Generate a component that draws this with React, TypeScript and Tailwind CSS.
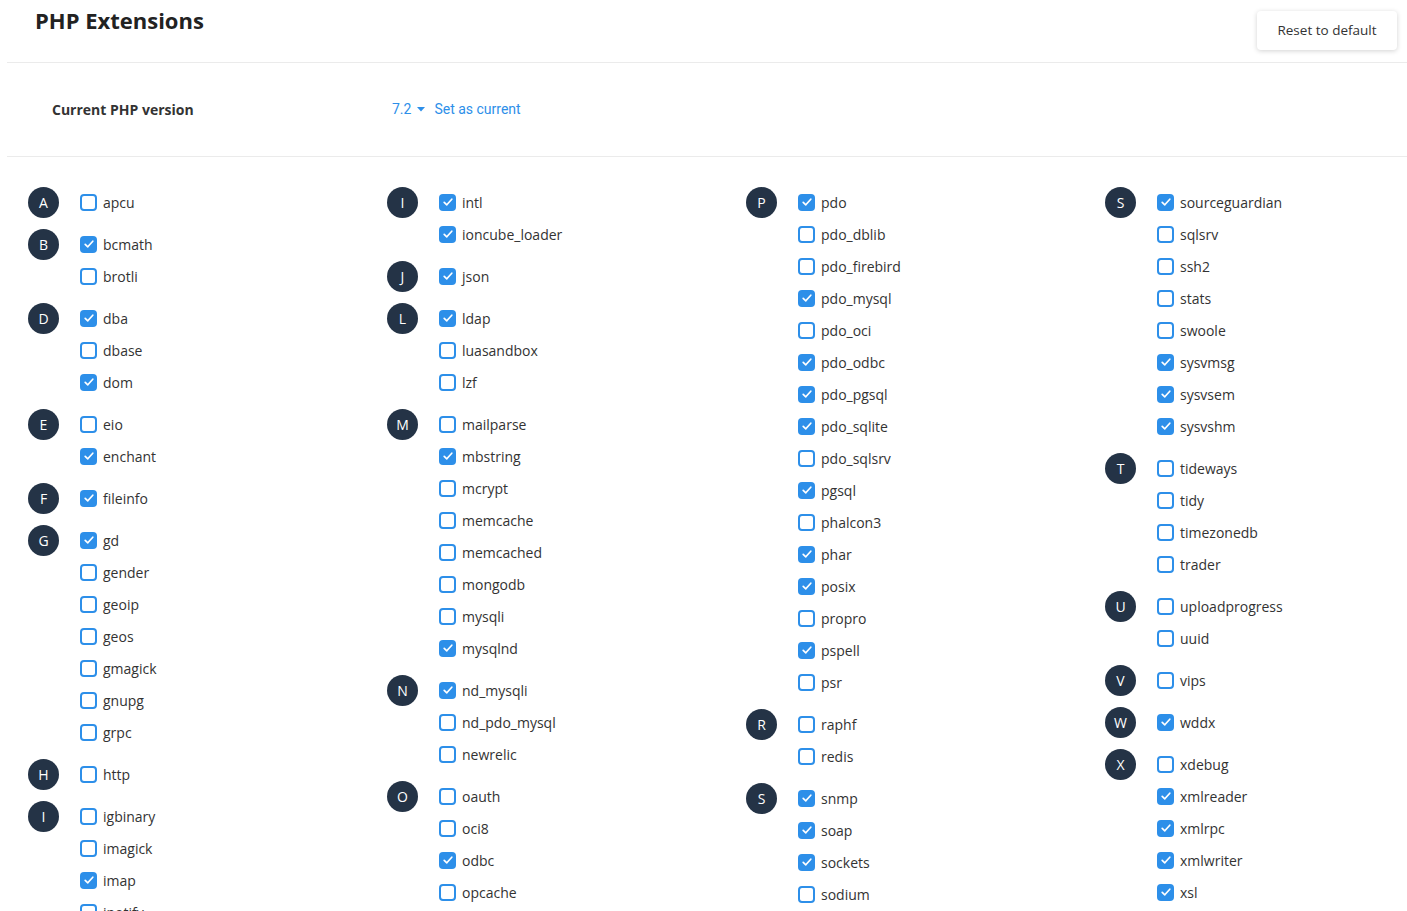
import React from 'react'

type Ext = [string, boolean]
type Group = { letter: string; items: Ext[] }

const columns: Group[][] = [
  [
    { letter: 'A', items: [['apcu', false]] },
    { letter: 'B', items: [['bcmath', true], ['brotli', false]] },
    { letter: 'D', items: [['dba', true], ['dbase', false], ['dom', true]] },
    { letter: 'E', items: [['eio', false], ['enchant', true]] },
    { letter: 'F', items: [['fileinfo', true]] },
    {
      letter: 'G',
      items: [['gd', true], ['gender', false], ['geoip', false], ['geos', false], ['gmagick', false], ['gnupg', false], ['grpc', false]],
    },
    { letter: 'H', items: [['http', false]] },
    { letter: 'I', items: [['igbinary', false], ['imagick', false], ['imap', true], ['inotify', false]] },
  ],
  [
    { letter: 'I', items: [['intl', true], ['ioncube_loader', true]] },
    { letter: 'J', items: [['json', true]] },
    { letter: 'L', items: [['ldap', true], ['luasandbox', false], ['lzf', false]] },
    {
      letter: 'M',
      items: [['mailparse', false], ['mbstring', true], ['mcrypt', false], ['memcache', false], ['memcached', false], ['mongodb', false], ['mysqli', false], ['mysqlnd', true]],
    },
    { letter: 'N', items: [['nd_mysqli', true], ['nd_pdo_mysql', false], ['newrelic', false]] },
    { letter: 'O', items: [['oauth', false], ['oci8', false], ['odbc', true], ['opcache', false]] },
  ],
  [
    {
      letter: 'P',
      items: [
        ['pdo', true], ['pdo_dblib', false], ['pdo_firebird', false], ['pdo_mysql', true], ['pdo_oci', false], ['pdo_odbc', true],
        ['pdo_pgsql', true], ['pdo_sqlite', true], ['pdo_sqlsrv', false], ['pgsql', true], ['phalcon3', false], ['phar', true],
        ['posix', true], ['propro', false], ['pspell', true], ['psr', false],
      ],
    },
    { letter: 'R', items: [['raphf', false], ['redis', false]] },
    { letter: 'S', items: [['snmp', true], ['soap', true], ['sockets', true], ['sodium', false]] },
  ],
  [
    {
      letter: 'S',
      items: [['sourceguardian', true], ['sqlsrv', false], ['ssh2', false], ['stats', false], ['swoole', false], ['sysvmsg', true], ['sysvsem', true], ['sysvshm', true]],
    },
    { letter: 'T', items: [['tideways', false], ['tidy', false], ['timezonedb', false], ['trader', false]] },
    { letter: 'U', items: [['uploadprogress', false], ['uuid', false]] },
    { letter: 'V', items: [['vips', false]] },
    { letter: 'W', items: [['wddx', true]] },
    { letter: 'X', items: [['xdebug', false], ['xmlreader', true], ['xmlrpc', true], ['xmlwriter', true], ['xsl', true]] },
  ],
]

function Checkbox({ checked }: { checked: boolean }) {
  if (checked) {
    return (
      <span className="w-[17px] h-[17px] rounded-[4px] bg-[#2d8fe9] flex items-center justify-center shrink-0">
        <svg width="12" height="12" viewBox="0 0 12 12" fill="none">
          <path d="M2.2 6.3 L4.8 8.8 L9.8 3.2" stroke="white" strokeWidth="1.7" strokeLinecap="round" strokeLinejoin="round" />
        </svg>
      </span>
    )
  }
  return <span className="w-[17px] h-[17px] rounded-[4px] border-2 border-[#2d8fe9] bg-white shrink-0" />
}

export default function App() {
  return (
    <div className="w-[1407px] h-[911px] overflow-hidden bg-white text-[#333] font-['Open_Sans',sans-serif]">
      <div className="ml-[7px]">
        <div className="h-[63px] border-b border-[#ebebeb] flex justify-between items-start">
          <h1 className="ml-[28px] mt-[3px] text-[22px] leading-[34px] font-bold text-[#222]">PHP Extensions</h1>
          <button className="mt-[11px] mr-[10px] w-[140px] h-[39px] rounded-[4px] bg-white text-[13.5px] text-[#333] shadow-[0_1px_5px_rgba(0,0,0,0.18)]">
            Reset to default
          </button>
        </div>
        <div className="h-[94px] border-b border-[#ebebeb] flex items-center">
          <div className="ml-[45px] w-[340px] text-[14px] font-bold text-[#333]">Current PHP version</div>
          <div className="flex items-center text-[14px] text-[#2d8fe9] font-['Roboto',sans-serif]">
            <span>7.2</span>
            <svg width="8" height="5" viewBox="0 0 8 5" className="ml-[6px]">
              <path d="M0 0 L8 0 L4 4.5 Z" fill="#2d8fe9" />
            </svg>
            <span className="ml-[9px]">Set as current</span>
          </div>
        </div>
        <div className="pl-[21px] pt-[19px] grid grid-cols-[repeat(4,359px)]">
          {columns.map((col, ci) => (
            <div key={ci} className="flex flex-col">
              {col.map((g, gi) => (
                <div key={gi} className="flex mt-[10px]">
                  <div className="w-[31px] h-[31px] mt-[0.5px] rounded-full bg-[#243346] text-white text-[14px] flex items-center justify-center shrink-0">
                    {g.letter}
                  </div>
                  <div className="ml-[21px] flex flex-col">
                    {g.items.map(([name, on]) => (
                      <label key={name} className="h-[32px] flex items-center gap-[6px]">
                        <Checkbox checked={on} />
                        <span className="text-[14px] text-[#333]">{name}</span>
                      </label>
                    ))}
                  </div>
                </div>
              ))}
            </div>
          ))}
        </div>
      </div>
    </div>
  )
}
